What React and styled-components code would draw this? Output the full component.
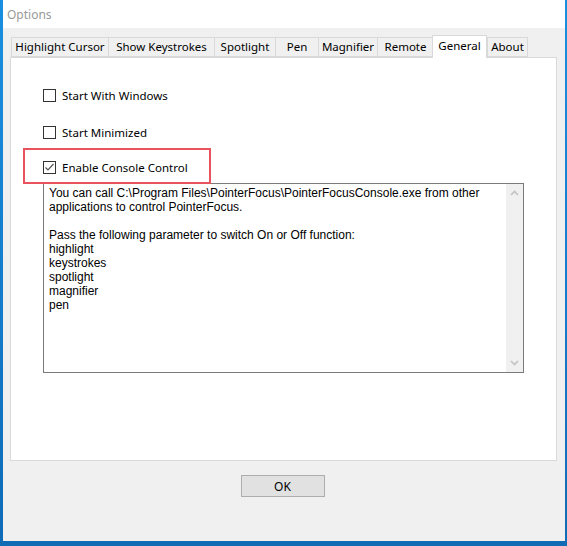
import React from "react";
import styled, { createGlobalStyle } from "styled-components";

const GlobalStyle = createGlobalStyle`
  html, body {
    margin: 0;
    padding: 0;
  }
  body {
    width: 567px;
    height: 546px;
    overflow: hidden;
    background: linear-gradient(180deg, #1a8fdf 0%, #1479c8 60%, #106bb5 100%);
    font-family: "Noto Sans", "Liberation Sans", sans-serif;
  }
`;

const tabs = [
  { label: "Highlight Cursor", width: 97 },
  { label: "Show Keystrokes", width: 106 },
  { label: "Spotlight", width: 61 },
  { label: "Pen", width: 43 },
  { label: "Magnifier", width: 59 },
  { label: "Remote", width: 56 },
  { label: "General", width: 54, active: true },
  { label: "About", width: 41 },
];

const consoleText = `You can call C:\\Program Files\\PointerFocus\\PointerFocusConsole.exe from other
applications to control PointerFocus.

Pass the following parameter to switch On or Off function:
highlight
keystrokes
spotlight
magnifier
pen`;

function App() {
  return (
    <>
      <GlobalStyle />
      <Window>
        <TitleBar>Options</TitleBar>
        <Body>
          <TabStrip>
            {tabs.map((t) => (
              <Tab key={t.label} $w={t.width} $active={t.active}>
                {t.label}
              </Tab>
            ))}
          </TabStrip>
          <Panel>
            <CheckRow $mt={0}>
              <CheckBox />
              <CheckLabel>Start With Windows</CheckLabel>
            </CheckRow>
            <CheckRow $mt={17}>
              <CheckBox />
              <CheckLabel>Start Minimized</CheckLabel>
            </CheckRow>
            <CheckRow $mt={15}>
              <CheckBox>
                <svg width="11" height="11" viewBox="0 0 11 11">
                  <polyline points="1.5,5.5 4,8 9.5,2" fill="none" stroke="#555" strokeWidth="1.2" />
                </svg>
              </CheckBox>
              <CheckLabel>Enable Console Control</CheckLabel>
              <Highlight />
            </CheckRow>
            <Memo>
              <MemoText>{consoleText}</MemoText>
              <ScrollBar>
                <svg width="9" height="6" viewBox="0 0 9 6">
                  <polyline points="1,5 4.5,1.5 8,5" fill="none" stroke="#c2c2c2" strokeWidth="1.6" />
                </svg>
                <svg width="9" height="6" viewBox="0 0 9 6">
                  <polyline points="1,1 4.5,4.5 8,1" fill="none" stroke="#c2c2c2" strokeWidth="1.6" />
                </svg>
              </ScrollBar>
            </Memo>
          </Panel>
          <ButtonRow>
            <OkButton>OK</OkButton>
          </ButtonRow>
        </Body>
      </Window>
    </>
  );
}

const Window = styled.div`
  margin-left: 3px;
  width: 562px;
  height: 541px;
  background: #f0f0f0;
  display: flex;
  flex-direction: column;
`;

const TitleBar = styled.div`
  height: 28px;
  background: #ffffff;
  color: #9a9a9a;
  font-size: 12px;
  line-height: 30px;
  padding-left: 4px;
`;

const Body = styled.div`
  padding: 6px 0 0 7px;
  display: flex;
  flex-direction: column;
`;

const TabStrip = styled.div`
  display: flex;
  align-items: flex-end;
  height: 23px;
  padding-left: 1px;
  position: relative;
  z-index: 1;
`;

const Tab = styled.div`
  box-sizing: border-box;
  width: ${(p) => p.$w + (p.$active ? 1 : 0)}px;
  height: ${(p) => (p.$active ? 23 : 20)}px;
  margin-left: ${(p) => (p.$active ? -1 : 0)}px;
  margin-bottom: ${(p) => (p.$active ? -1 : 0)}px;
  border: 1px solid #d9d9d9;
  border-bottom: ${(p) => (p.$active ? "none" : "1px solid #d9d9d9")};
  border-right: ${(p) => (p.$active ? "1px solid #d9d9d9" : "none")};
  background: ${(p) => (p.$active ? "#ffffff" : "#f0f0f0")};
  color: #000;
  font-size: 11.5px;
  line-height: ${(p) => (p.$active ? 19 : 18)}px;
  text-align: center;
  white-space: nowrap;
  &:last-child {
    border-right: 1px solid #d9d9d9;
  }
`;

const Panel = styled.div`
  box-sizing: border-box;
  width: 547px;
  height: 404px;
  background: #ffffff;
  border: 1px solid #d9d9d9;
  padding: 27px 0 0 32px;
  display: flex;
  flex-direction: column;
  align-items: flex-start;
`;

const CheckRow = styled.div`
  position: relative;
  display: flex;
  align-items: center;
  height: 20px;
  margin-top: ${(p) => p.$mt}px;
`;

const CheckBox = styled.span`
  box-sizing: border-box;
  width: 13px;
  height: 13px;
  border: 1px solid #333333;
  background: #fff;
  display: flex;
  align-items: center;
  justify-content: center;
`;

const CheckLabel = styled.span`
  margin-left: 6px;
  font-size: 11.5px;
  color: #000;
  white-space: nowrap;
`;

const Highlight = styled.span`
  position: absolute;
  left: -20px;
  top: -9px;
  width: 188px;
  height: 36px;
  box-sizing: border-box;
  border: 2px solid #e8535e;
  pointer-events: none;
`;

const Memo = styled.div`
  box-sizing: border-box;
  margin-top: 6px;
  width: 481px;
  height: 190px;
  border: 1px solid #7a7a7a;
  display: flex;
`;

const MemoText = styled.div`
  flex: 1;
  padding: 2px 0 0 5px;
  font-family: "Liberation Sans", Arial, sans-serif;
  font-size: 12px;
  line-height: 14px;
  color: #000;
  white-space: pre-line;
`;

const ScrollBar = styled.div`
  width: 17px;
  background: #f0f0f0;
  display: flex;
  flex-direction: column;
  justify-content: space-between;
  align-items: center;
  padding: 6px 0 6px;
`;

const ButtonRow = styled.div`
  width: 547px;
  display: flex;
  justify-content: center;
  margin-top: 14px;
`;

const OkButton = styled.button`
  box-sizing: border-box;
  width: 84px;
  height: 22px;
  margin-left: -2px;
  background: #e1e1e1;
  border: 1px solid #adadad;
  font-family: "Noto Sans", "Liberation Sans", sans-serif;
  font-size: 12px;
  color: #000;
  padding: 0;
`;

export default App;
